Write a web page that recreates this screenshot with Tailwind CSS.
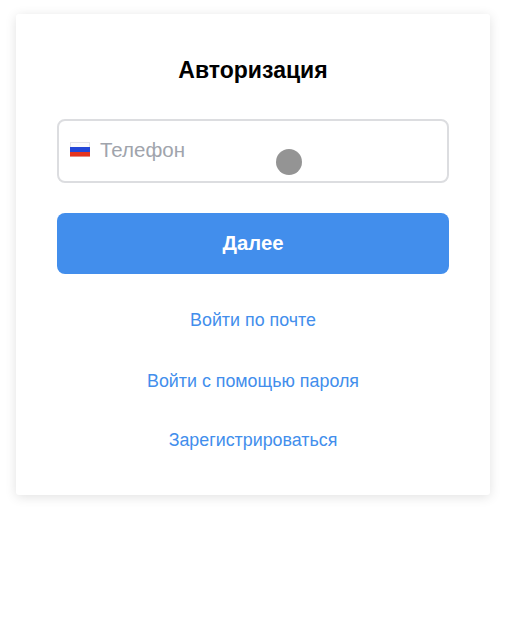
<!doctype html>
<html>
<head>
  <meta charset="UTF-8">
  <title>Авторизация</title>
  <script src="https://cdn.jsdelivr.net/npm/@tailwindcss/browser@4"></script>
</head>
<body class="bg-white font-['Liberation_Sans',Arial,sans-serif]">
  <div class="relative w-[512px] h-[633px] overflow-hidden pt-[14px] pl-[16px]">
    <div class="w-[474px] h-[481px] bg-white rounded-[3px] shadow-[0_2px_12px_rgba(0,0,0,0.12)] px-[41px] pt-[42px]">
      <h1 class="text-[23px] leading-[28px] font-bold text-black text-center">Авторизация</h1>

      <div class="mt-[35px] h-[64px] border-2 border-[#dcdde0] rounded-[8px] flex items-center pl-[11px]">
        <svg class="w-[20px] h-[15px] -mt-[3px]" viewBox="0 0 20 15">
          <rect width="20" height="15" fill="#e4e4e9"/>
          <rect x="1" y="1" width="18" height="4" fill="#fbfbfd"/>
          <rect x="0" y="5" width="20" height="5" fill="#2347d8"/>
          <rect x="0" y="10" width="20" height="4.5" fill="#e5341f"/>
        </svg>
        <span class="ml-[10px] text-[20.5px] text-[#a0a4ac] -mt-[2px]">Телефон</span>
      </div>

      <button class="mt-[29.5px] w-full h-[61.5px] rounded-[8px] bg-[#428eec] text-white text-[20.3px] font-bold">Далее</button>

      <div class="flex flex-col items-center text-[17.85px] leading-[22px] text-[#428eec]">
        <a class="mt-[35px]">Войти по почте</a>
        <a class="mt-[39px]">Войти с помощью пароля</a>
        <a class="mt-[37px]">Зарегистрироваться</a>
      </div>
    </div>

    <div class="absolute left-[275.5px] top-[148.5px] w-[26px] h-[26px] rounded-full bg-[#949494]"></div>
  </div>
</body>
</html>
